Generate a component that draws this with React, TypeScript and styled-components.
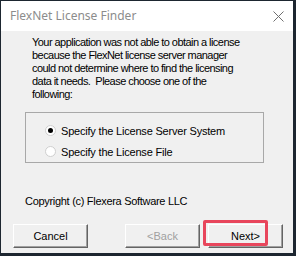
import styled, { createGlobalStyle } from "styled-components";

const Global = createGlobalStyle`
  html, body {
    margin: 0;
    padding: 0;
    background: #1d2630;
  }
`;

const ui = `"Liberation Sans", Arial, sans-serif`;

const messageLines = [
  "Your application was not able to obtain a license",
  "because the FlexNet license server manager",
  "could not determine where to find the licensing",
  "data it needs.\u00a0 Please choose one of the",
  "following:",
];

export default function App() {
  return (
    <>
      <Global />
      <S.Desktop>
        <S.Window>
          <S.TitleBar>
            <S.Title>FlexNet License Finder</S.Title>
            <S.Close>
              <svg width="11" height="11" viewBox="0 0 11 11">
                <path d="M0.5 0.5 L10.5 10.5 M10.5 0.5 L0.5 10.5" stroke="#6f6f6f" strokeWidth="1" />
              </svg>
            </S.Close>
          </S.TitleBar>
          <S.Body>
            <S.Message>
              {messageLines.map((line) => (
                <S.Line key={line}>{line}</S.Line>
              ))}
            </S.Message>
            <S.Group>
              <S.Option>
                <S.Radio $checked />
                Specify the License Server System
              </S.Option>
              <S.Option>
                <S.Radio />
                Specify the License File
              </S.Option>
            </S.Group>
            <S.Copyright>Copyright (c) Flexera Software LLC</S.Copyright>
            <S.Buttons>
              <S.Button>Cancel</S.Button>
              <S.Spacer />
              <S.Button disabled>&lt;Back</S.Button>
              <S.NextWrap>
                <S.Button>Next&gt;</S.Button>
                <S.Highlight />
              </S.NextWrap>
            </S.Buttons>
          </S.Body>
        </S.Window>
      </S.Desktop>
    </>
  );
}

const S = {
  Desktop: styled.div`
    width: 296px;
    height: 256px;
    padding: 1px 3px 3px 1px;
    box-sizing: border-box;
  `,
  Window: styled.div`
    width: 292px;
    height: 252px;
    display: flex;
    flex-direction: column;
    background: #f0f0f0;
  `,
  //
  TitleBar: styled.div`
    height: 30px;
    display: flex;
    align-items: center;
    background: #fff;
    padding: 0 9px 0 9px;
  `,
  Title: styled.span`
    flex-grow: 1;
    font-family: "Noto Sans", "Open Sans", sans-serif;
    font-size: 12px;
    color: #8c8c8c;
    margin-top: -1px;
  `,
  Close: styled.span`
    display: flex;
  `,
  //
  Body: styled.div`
    flex-grow: 1;
    display: flex;
    flex-direction: column;
    padding: 5px 9px 4px 11px;
    font-family: ${ui};
    font-size: 11px;
    color: #000;
  `,
  Message: styled.div`
    margin: 0 0 0 20px;
    display: flex;
    flex-direction: column;
    height: 66px;
  `,
  Line: styled.div`
    line-height: 13px;
    white-space: nowrap;
    letter-spacing: -0.55px;
  `,
  Group: styled.div`
    margin: 10px 0 0 13px;
    width: 239px;
    height: 51px;
    box-sizing: border-box;
    border: 1px solid #a8a8a8;
    display: flex;
    flex-direction: column;
    gap: 8px;
    padding: 11px 0 0 19px;
  `,
  Option: styled.div`
    display: flex;
    align-items: center;
    height: 13px;
    gap: 5px;
    letter-spacing: -0.2px;
  `,
  Radio: styled.span<{ $checked?: boolean }>`
    width: 11px;
    height: 11px;
    box-sizing: border-box;
    border-radius: 50%;
    border: 1px solid #cfcfcf;
    background: #fff;
    display: flex;
    align-items: center;
    justify-content: center;
    &::after {
      content: "";
      width: 5px;
      height: 5px;
      border-radius: 50%;
      background: ${(p) => (p.$checked ? "#000" : "transparent")};
    }
  `,
  Copyright: styled.div`
    margin: 32px 0 0 13px;
    line-height: 13px;
    letter-spacing: -0.3px;
  `,
  Buttons: styled.div`
    margin-top: 16px;
    display: flex;
    align-items: center;
    margin-left: 1px;
  `,
  Spacer: styled.div`
    width: 37px;
  `,
  Button: styled.button`
    width: 75px;
    height: 24px;
    font-family: ${ui};
    font-size: 11px;
    color: #000;
    background: #f0f0f0;
    border: 1px solid;
    border-color: #fff #646464 #646464 #fff;
    box-shadow: inset -1px -1px 0 #a0a0a0;
    padding: 0;
    &:disabled {
      color: #a0a0a0;
    }
  `,
  NextWrap: styled.div`
    position: relative;
    margin-left: 8px;
    display: flex;
  `,
  Highlight: styled.div`
    position: absolute;
    left: -5px;
    top: -4px;
    width: 65px;
    height: 26px;
    box-sizing: border-box;
    border: 3px solid #e8465c;
    border-radius: 2px;
  `,
};
